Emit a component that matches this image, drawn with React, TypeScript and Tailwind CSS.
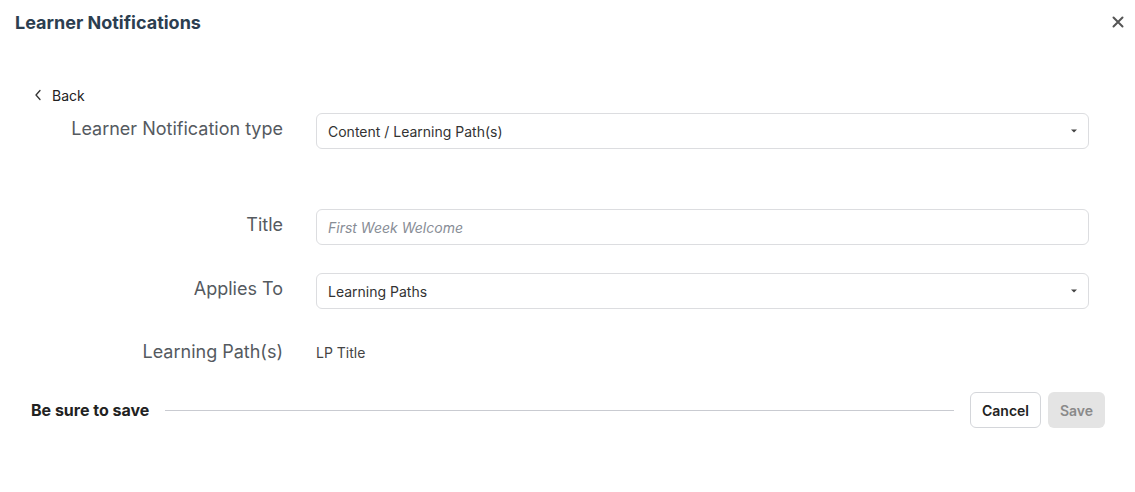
import React from 'react';

const font = { fontFamily: 'Inter, "Liberation Sans", sans-serif' };

function Caret() {
  return (
    <svg width="6" height="4" viewBox="0 0 6 4" className="shrink-0">
      <path d="M0 0.5h6L3 3.5z" fill="#444" />
    </svg>
  );
}

function Row({
  label,
  children,
  className = '',
  raised = true,
}: {
  label: string;
  children: React.ReactNode;
  className?: string;
  raised?: boolean;
}) {
  return (
    <div className={`grid grid-cols-[252px_1fr] gap-x-[33px] items-center ${className}`}>
      <div className={`text-right text-[18px] leading-[24px] text-[#555a5f] ${raised ? 'pb-[5px]' : ''}`}>{label}</div>
      <div>{children}</div>
    </div>
  );
}

function SelectBox({ value }: { value: string }) {
  return (
    <div className="h-[36px] flex items-center justify-between rounded-[6px] border border-[#dcdde0] bg-white pl-[11px] pr-[11px] text-[14px] text-[#333]">
      <span>{value}</span>
      <Caret />
    </div>
  );
}

export default function App() {
  return (
    <div className="w-[1135px] h-[492px] bg-white" style={font}>
      <div className="flex items-center justify-between h-[44px] pl-[15px] pr-[11px]">
        <h1 className="text-[18px] font-bold text-[#2c3e50]">Learner Notifications</h1>
        <button className="text-[#555]">
          <svg width="12" height="12" viewBox="0 0 12 12">
            <path d="M1.5 1.5l9 9M10.5 1.5l-9 9" stroke="#555" strokeWidth="2" strokeLinecap="round" />
          </svg>
        </button>
      </div>

      <div className="pl-[31px] pr-[46px] pt-[40px]">
        <button className="flex items-center gap-[10px] h-[22px] pl-[3px] text-[14px] text-[#222]">
          <svg width="8" height="12" viewBox="0 0 8 12">
            <path d="M6 1.5L2 6l4 4.5" fill="none" stroke="#333" strokeWidth="1.3" strokeLinecap="round" strokeLinejoin="round" />
          </svg>
          Back
        </button>

        <Row label="Learner Notification type" className="mt-[7px]">
          <SelectBox value="Content / Learning Path(s)" />
        </Row>

        <Row label="Title" className="mt-[60px]">
          <div className="h-[36px] flex items-center rounded-[6px] border border-[#dcdde0] bg-white pl-[11px] text-[14px] italic text-[#888d96]">
            First Week Welcome
          </div>
        </Row>

        <Row label="Applies To" className="mt-[28px]">
          <SelectBox value="Learning Paths" />
        </Row>

        <Row label="Learning Path(s)" className="mt-[25px] h-[36px]" raised={false}>
          <div className="text-[14px] text-[#444]">LP Title</div>
        </Row>
      </div>

      <div className="flex items-center pl-[31px] pr-[30px] mt-[22px]">
        <span className="text-[16px] font-bold text-[#222]">Be sure to save</span>
        <div className="flex-1 h-px bg-[#c9cbd1] ml-[16px] mr-[16px]" />
        <button className="h-[36px] w-[71px] rounded-[6px] border border-[#d4d6da] bg-white text-[14px] font-semibold text-[#222]">
          Cancel
        </button>
        <button className="ml-[7px] h-[36px] w-[57px] rounded-[6px] bg-[#e4e4e4] text-[14px] font-semibold text-[#8a8a8a]">
          Save
        </button>
      </div>
    </div>
  );
}
